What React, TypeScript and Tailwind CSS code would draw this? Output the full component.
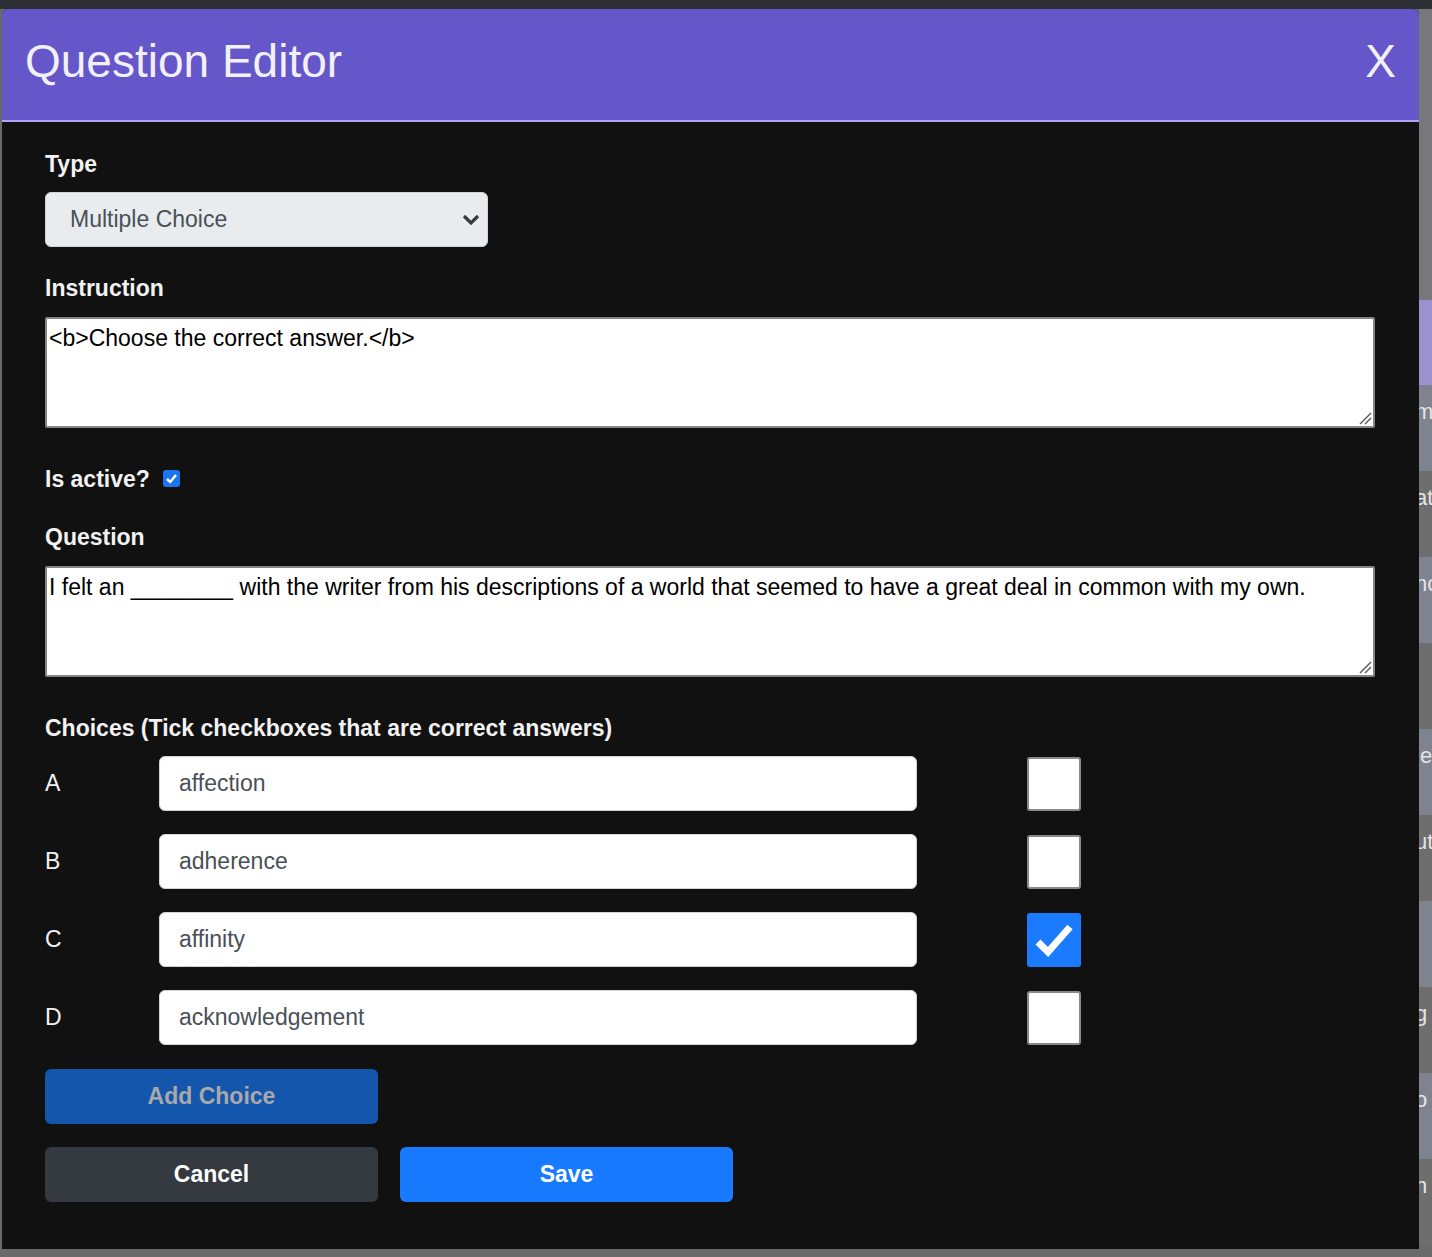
import React from "react";

interface Choice {
  letter: string;
  value: string;
  correct: boolean;
}

const choices: Choice[] = [
  { letter: "A", value: "affection", correct: false },
  { letter: "B", value: "adherence", correct: false },
  { letter: "C", value: "affinity", correct: true },
  { letter: "D", value: "acknowledgement", correct: false },
];

// strips of the page that sits behind the dialog (only the right edge shows)
const backRows = [
  { text: "m", tone: "bg-[#7e838f]" },
  { text: "at", tone: "bg-[#6e6e6e]" },
  { text: "nc", tone: "bg-[#7e838f]" },
  { text: "", tone: "bg-[#6e6e6e]" },
  { text: "ie", tone: "bg-[#7e838f]" },
  { text: "ut", tone: "bg-[#6e6e6e]" },
  { text: "", tone: "bg-[#7e838f]" },
  { text: "g", tone: "bg-[#6e6e6e]" },
  { text: "o", tone: "bg-[#7e838f]" },
  { text: "h", tone: "bg-[#6e6e6e]" },
];

function Label({ children }: { children: React.ReactNode }) {
  return <div className="text-[23px] leading-[34px] font-bold text-[#f2f2f2]">{children}</div>;
}

function BigCheckbox({ checked }: { checked: boolean }) {
  if (checked) {
    return (
      <div className="w-[54px] h-[54px] rounded-[3px] bg-[#1a7bff]">
        <svg width="54" height="54" viewBox="0 0 54 54">
          <path d="M11 29 L21 39 L43 14" fill="none" stroke="white" strokeWidth="7" />
        </svg>
      </div>
    );
  }
  return <div className="w-[54px] h-[54px] rounded-[3px] bg-white border-2 border-[#8a8a8a]" />;
}

function TextBox({ value }: { value: string }) {
  return (
    <div className="relative w-[1330px]">
      <textarea
        readOnly
        defaultValue={value}
        className="block w-[1330px] h-[111px] resize-none bg-white text-black border-2 border-[#858585] rounded-[2px] pt-[6px] pl-[2px] text-[23px] leading-[26px] outline-none"
      />
      {/* resize grip */}
      <svg className="absolute right-[3px] bottom-[3px]" width="14" height="14" viewBox="0 0 14 14">
        <path d="M2 13 L13 2 M7 13 L13 7" stroke="#555" strokeWidth="1.4" />
      </svg>
    </div>
  );
}

export default function App() {
  return (
    <div className="relative h-[1257px] w-full overflow-hidden bg-[#6a6a6a] font-['Liberation_Sans',Arial,sans-serif]">
      {/* page behind the dialog */}
      <div className="h-[9px] bg-[#2f3035]" />
      <div className="flex justify-end">
        <div className="w-[13px] flex flex-col">
          <div className="h-[291px] bg-[#78787c]" />
          <div className="h-[85px] bg-[#9c92cf]" />
          {backRows.map((r, i) => (
            <div key={i} className={`h-[86px] overflow-hidden ${r.tone}`}>
              <div className="pt-[14px] -ml-[4px] text-[22px] leading-[26px] text-[#e4e4e4] whitespace-nowrap">{r.text}</div>
            </div>
          ))}
        </div>
      </div>

      {/* dialog */}
      <div className="absolute left-[2px] top-[9px] w-[1417px] h-[1240px] bg-[#111111] rounded-t-[6px] overflow-hidden">
        <div className="h-[113px] bg-[#6557ca] border-b-2 border-[#aea5f0] flex justify-between px-[23px] pt-[29px]">
          <div className="text-[46px] leading-[46px] text-[#f1f0f7]">Question Editor</div>
          <div className="text-[46px] leading-[46px] text-[#f1f0f7]">X</div>
        </div>

        <div className="pl-[43px] pt-[25px]">
          <Label>Type</Label>
          <div className="mt-[11px] w-[443px] h-[55px] bg-[#e9ecef] border border-[#ced4da] rounded-[6px] flex items-center justify-between pl-[24px] pr-[7px]">
            <span className="text-[23px] text-[#495057]">Multiple Choice</span>
            <svg width="18" height="12" viewBox="0 0 18 12">
              <path d="M2 2 L9 9 L16 2" fill="none" stroke="#343a40" strokeWidth="3.2" />
            </svg>
          </div>

          <div className="mt-[24px]">
            <Label>Instruction</Label>
          </div>
          <div className="mt-[12px]">
            <TextBox value="<b>Choose the correct answer.</b>" />
          </div>

          <div className="mt-[34px] flex items-center gap-[13px]">
            <Label>Is active?</Label>
            <div className="w-[17px] h-[17px] rounded-[3px] bg-[#1b74f0] -mt-[2px]">
              <svg width="17" height="17" viewBox="0 0 17 17">
                <path d="M4 9 L7.2 12 L13 5" fill="none" stroke="white" strokeWidth="2.4" />
              </svg>
            </div>
          </div>

          <div className="mt-[24px]">
            <Label>Question</Label>
          </div>
          <div className="mt-[12px]">
            <TextBox value="I felt an ________ with the writer from his descriptions of a world that seemed to have a great deal in common with my own." />
          </div>

          <div className="mt-[34px]">
            <Label>Choices (Tick checkboxes that are correct answers)</Label>
          </div>
          <div className="mt-[11px] flex flex-col gap-[23px]">
            {choices.map((c) => (
              <div key={c.letter} className="flex items-center">
                <div className="w-[114px] text-[23px] text-[#f2f2f2]">{c.letter}</div>
                <div className="w-[758px] h-[55px] bg-white border border-[#ced4da] rounded-[6px] flex items-center pl-[19px] text-[23px] text-[#495057]">
                  {c.value}
                </div>
                <div className="ml-[110px]">
                  <BigCheckbox checked={c.correct} />
                </div>
              </div>
            ))}
          </div>

          <button className="mt-[24px] block w-[333px] h-[55px] rounded-[6px] bg-[#1456ab] text-[23px] font-bold text-[#a9a9a9]">
            Add Choice
          </button>
          <div className="mt-[23px] flex gap-[22px]">
            <button className="w-[333px] h-[55px] rounded-[6px] bg-[#343a40] text-[23px] font-bold text-white">
              Cancel
            </button>
            <button className="w-[333px] h-[55px] rounded-[6px] bg-[#187bff] text-[23px] font-bold text-white">
              Save
            </button>
          </div>
        </div>
      </div>
    </div>
  );
}
